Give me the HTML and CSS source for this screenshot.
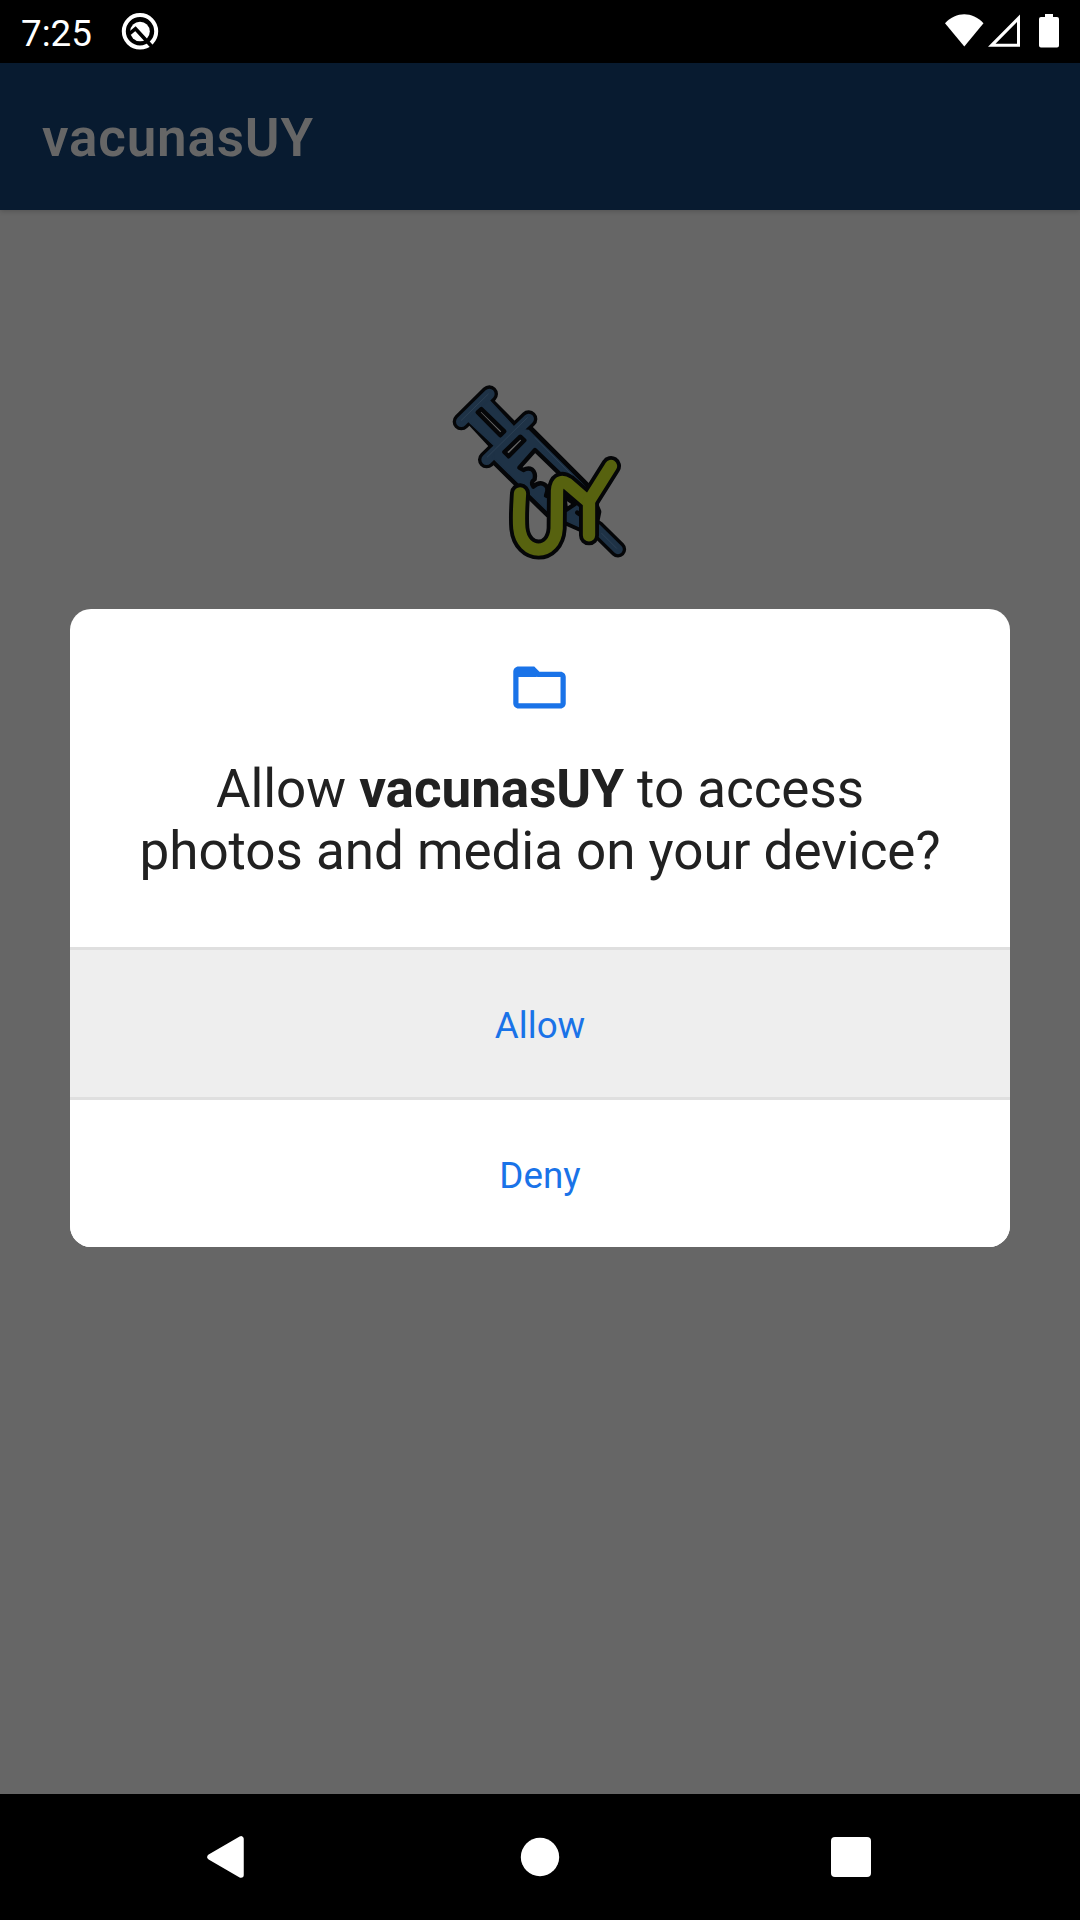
FILE: index.html
```html
<!DOCTYPE html>
<html lang="en">
<head>
<meta charset="utf-8">
<title>vacunasUY</title>
<link rel="stylesheet" href="styles.css">
</head>
<body>
<div class="screen">
  <header class="status-bar">
    <span class="clock">7:25</span>
    <svg class="notification" width="40" height="40" viewBox="0 0 40 40">
      <circle cx="20" cy="20.3" r="16.2" fill="none" stroke="#fff" stroke-width="4"/>
      <circle cx="20" cy="20.5" r="9.800" fill="#fff"/>
      <path d="M9.500 22.700L15.500 17.700L32.500 36.200" fill="none" stroke="#000" stroke-width="3.600"/>
    </svg>
    <svg class="system-icons" width="116" height="36" viewBox="0 0 116 36">
      <path d="M1 11.300C12.500-.6 28-.6 39.500 11.300L20.300 34.500Z" fill="#fff"/>
      <path d="M44 34.700L76 2.500V34.700ZM51.500 31.700H73V10Z" fill="#fff" fill-rule="evenodd"/>
      <path d="M101 2h8v3h4a2 2 0 0 1 2 2v26.500a2 2 0 0 1-2 2h-16a2 2 0 0 1-2-2V7a2 2 0 0 1 2-2h4z" fill="#fff"/>
    </svg>
  </header>
  <div class="window">
    <div class="app">
      <div class="app-bar"><h1 class="app-title">vacunasUY</h1></div>
      <main class="app-content">
        <svg class="logo" width="200" height="200" viewBox="0 0 600 600" stroke-linecap="round" stroke-linejoin="round">
          <g fill="#050608" stroke="#050608">
            <path d="M64 155L148 72M140 269L266 147" stroke-width="52" fill="none"/>
            <path d="M90 153L150 93L226 170L270 178L440 348L473 425L463 475L425 476L325 432L160 270L163 232Z" stroke-width="22"/>
            <path d="M470 475L534 538" stroke-width="49"/>
          </g>
          <g fill="#1e3246" stroke="#1e3246">
            <path d="M64 155L148 72M140 269L266 147" stroke-width="32" fill="none"/>
            <path d="M84 153L146 89L226 175L265 181L440 355L465 425L455 463L424 473L330 430L160 265L165 229Z" stroke-width="4"/>
            <path d="M470 475L534 538" stroke-width="29"/>
          </g>
          <path d="M64 151L145 72M142 261L262 143M285 203L425 345M485 490L530 535" fill="none" stroke="#2c4054" stroke-width="3"/>
          <g fill="#666" stroke="#050608" stroke-width="13">
            <path d="M113 127L124 117L193 184L181 196Z"/>
            <path d="M193 246L241 200L253 211L206 259Z"/>
            <path d="M285 240L372 324L338 365Q334 385 318 377Q330 349 309 341Q295 336 280 350Q270 338 284 328Q288 308 276 298Q264 292 250 300L238 293Z"/>
            <path d="M373 380L405 402L378 420Z"/>
          </g>
          <path d="M412 428L430 440M470 425V460" stroke="#050608" stroke-width="14"/>
          <g fill="none" stroke="#050608" stroke-width="60">
            <path d="M240 370C238 405 235 440 238 475C247 560 345 560 350 475L351 362Q354 323 383 342L447 397"/>
            <path d="M513 288L447 393V496"/>
          </g>
          <g fill="none" stroke="#57620f" stroke-width="37">
            <path d="M240 370C238 405 235 440 238 475C247 560 345 560 350 475L351 362Q354 323 383 342L447 397"/>
            <path d="M513 288L447 393V496"/>
          </g>
        </svg>
      </main>
    </div>
    <div class="overlay">
      <section class="dialog" role="dialog">
        <div class="dialog-message">
          <svg class="folder" width="63" height="63" viewBox="0 0 24 24">
            <path d="M9.170 6l2 2H20v10H4V6h5.170M10 4H4c-1.100 0-1.990.9-1.990 2L2 18c0 1.100.9 2 2 2h16c1.100 0 2-.9 2-2V8c0-1.100-.9-2-2-2h-8l-2-2z" fill="#1a73e8"/>
            <path d="M3.500 5.500H11V8H3.500z" fill="#1a73e8"/>
          </svg>
          <p class="question">Allow <b>vacunasUY</b> to access<br>photos and media on your device?</p>
        </div>
        <button class="action action-focused">Allow</button>
        <button class="action">Deny</button>
      </section>
    </div>
  </div>
  <nav class="nav-bar">
    <svg width="1080" height="126" viewBox="0 0 1080 126" fill="#fff">
      <path d="M210 63L241 45V81Z" stroke="#fff" stroke-width="5.500" stroke-linejoin="round"/>
      <circle cx="540" cy="63" r="19.200"/>
      <rect x="831" y="43" width="40" height="40" rx="4"/>
    </svg>
  </nav>
</div>
</body>
</html>
```
FILE: styles.css
```css
* {
  box-sizing: border-box;
}

body {
  margin: 0;
  background: #000;
  font-family: Roboto, sans-serif;
}

.screen {
  width: 1080px;
  height: 1920px;
  display: flex;
  flex-direction: column;
  overflow: hidden;
}

.status-bar {
  height: 63px;
  padding: 0 20px 0 21px;
  display: flex;
  align-items: flex-start;
  background: #000;
  color: #fff;
}

.clock {
  margin-top: 12px;
  width: 99px;
  font-size: 36.75px;
  line-height: 44px;
}

.notification {
  margin-top: 11px;
}

.system-icons {
  margin: 12px 0 0 auto;
}

.window {
  flex: 1;
  display: grid;
  grid-template: 1731px / 1080px;
}

.app,
.overlay {
  grid-area: 1 / 1;
}

.app {
  display: flex;
  flex-direction: column;
  background: #666;
}

.app-bar {
  height: 147px;
  padding: 0 42px;
  display: flex;
  align-items: center;
  background: #081b30;
  box-shadow: 0 1px 5px rgba(0, 0, 0, 0.2);
}

.app-title {
  margin: 2px 0 0;
  color: #666;
  font-size: 53px;
  font-weight: 600;
  line-height: 62px;
  letter-spacing: 0.8px;
}

.app-content {
  padding-top: 160px;
  display: flex;
  justify-content: center;
}

.logo {
  filter: blur(0.5px);
}

.overlay {
  padding-top: 546px;
  display: flex;
  justify-content: center;
  align-items: flex-start;
  z-index: 1;
}

.dialog {
  width: 940px;
  height: 638px;
  display: flex;
  flex-direction: column;
  overflow: hidden;
  border-radius: 21px;
  background: #fff;
}

.dialog-message {
  height: 338px;
  padding-top: 47px;
  display: flex;
  flex-direction: column;
  align-items: center;
}

.folder {
  margin-right: 1px;
}

.question {
  margin: 39px 0 0;
  color: #212121;
  font-size: 53px;
  line-height: 62px;
  letter-spacing: -0.04px;
  text-align: center;
  white-space: nowrap;
}

.action {
  height: 150px;
  padding: 5px 0 0;
  border: 0;
  border-top: 3px solid #dfdfdf;
  background: #fff;
  color: #1a73e8;
  font: 36.75px/44px Roboto, sans-serif;
}

.action-focused {
  background: #eee;
}

.nav-bar {
  height: 126px;
  background: #000;
}

.nav-bar svg {
  display: block;
}
```
